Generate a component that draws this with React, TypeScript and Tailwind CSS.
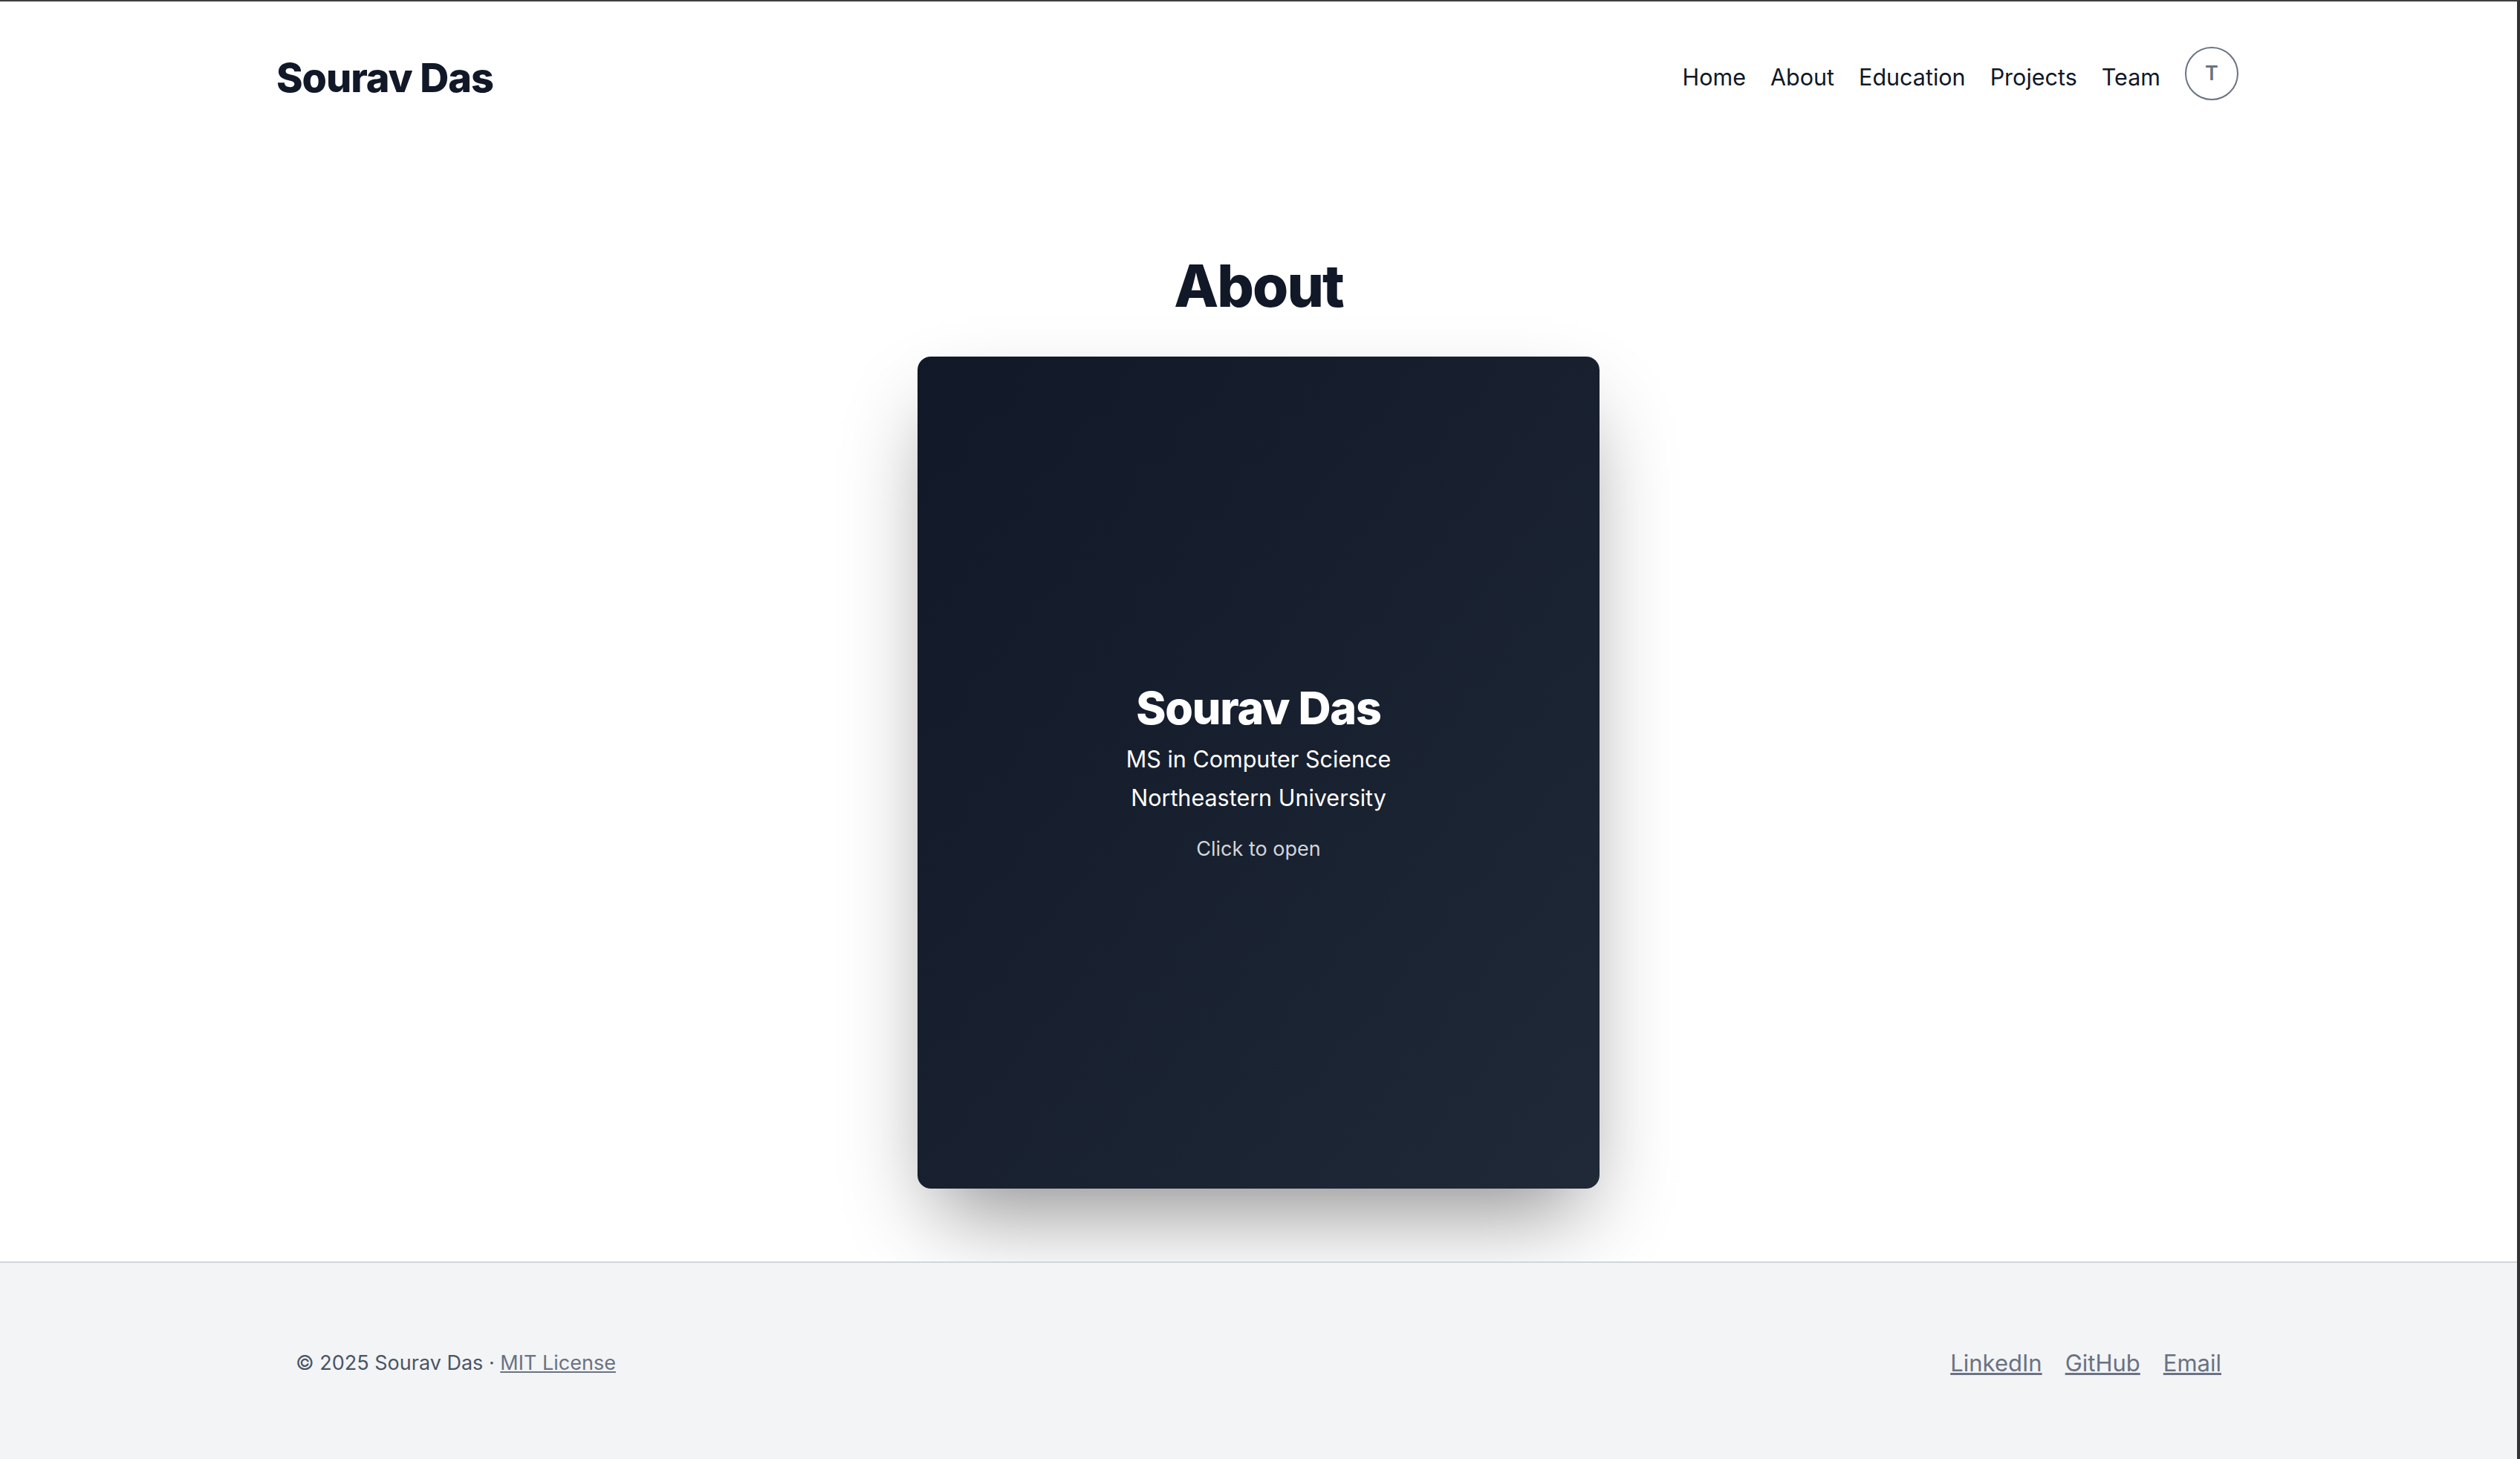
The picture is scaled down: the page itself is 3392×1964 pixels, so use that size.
const navLinks = ['Home', 'About', 'Education', 'Projects', 'Team'];
const footerLinks = ['LinkedIn', 'GitHub', 'Email'];

export default function App() {
  return (
    <div
      className="min-h-screen flex flex-col bg-white border-t-2 border-t-[#3f3f3f] border-r-4 border-r-[#333333]"
      style={{ fontFamily: 'Inter, "Noto Sans", sans-serif' }}
    >
      {/* Header */}
      <header className="h-[204px] pl-[372px] pr-[375px] flex items-center justify-between">
        <a className="text-[54px] font-extrabold text-[#111827] tracking-[-0.02em]">Sourav Das</a>
        <nav className="flex items-center gap-[33px] text-[30.5px] text-[#111827]">
          {navLinks.map((link) => (
            <a key={link}>{link}</a>
          ))}
          <button className="w-[72px] h-[72px] rounded-full border-2 border-gray-500 flex items-center justify-center text-[27px] font-semibold text-gray-500 -mt-[10px]">
            T
          </button>
        </nav>
      </header>

      {/* Main */}
      <main className="flex-1 flex flex-col items-center pt-[136px] pb-[96px]">
        <h1 className="text-[78px] leading-[86px] font-extrabold tracking-[-0.025em] text-[#111827] mb-[52px]">About</h1>
        <div className="w-[918px] h-[1120px] rounded-[18px] bg-gradient-to-br from-[#111827] to-[#1f2937] shadow-[0_56px_112px_-27px_rgba(0,0,0,0.45)] flex flex-col items-center justify-center text-center text-white cursor-pointer">
          <h2 className="text-[61px] leading-[72px] font-extrabold tracking-[-0.02em]">Sourav Das</h2>
          <p className="text-[30.5px] leading-[52px] mt-[7px]">MS in Computer Science</p>
          <p className="text-[30.5px] leading-[52px]">Northeastern University</p>
          <p className="text-[27px] leading-[40px] text-gray-300 mt-[23px]">Click to open</p>
        </div>
      </main>

      {/* Footer */}
      <footer className="h-[266px] bg-gray-100 border-t-2 border-gray-300 px-[398px] pt-[6px] flex items-center justify-between">
        <p className="text-[27px] text-gray-600">
          © 2025 Sourav Das · <a className="underline text-gray-500">MIT License</a>
        </p>
        <div className="flex items-center gap-[31px] text-[31px] text-gray-500">
          {footerLinks.map((link) => (
            <a key={link} className="underline">
              {link}
            </a>
          ))}
        </div>
      </footer>
    </div>
  );
}
